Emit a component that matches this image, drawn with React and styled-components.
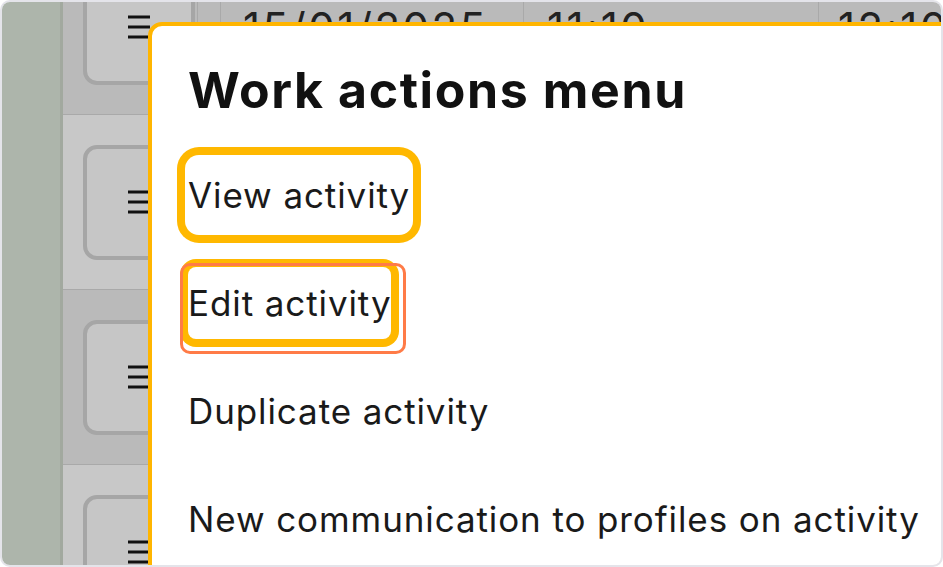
import React from 'react';
import styled, { createGlobalStyle } from 'styled-components';

const GlobalStyle = createGlobalStyle`
    body {
        margin: 0;
        background: #fff;
        font-family: Inter, "Noto Sans", sans-serif;
        color: #111;
    }
`;

const Frame = styled.div`
    position: relative;
    width: 943px;
    height: 567px;
    box-sizing: border-box;
    border: 2px solid #e4e4ea;
    border-radius: 10px;
    overflow: hidden;
    display: flex;
    background: #fff;
`;

const Sidebar = styled.div`
    width: 58px;
    flex-shrink: 0;
    background: #adb5ab;
    border-right: 3px solid #a2a99f;
`;

const Table = styled.div`
    flex: 1;
    display: flex;
    flex-direction: column;
    margin-top: -62px;
`;

const Row = styled.div`
    display: grid;
    grid-template-columns: 135px 23px 303px 295px 1fr;
    height: 175px;
    flex-shrink: 0;
    box-sizing: border-box;
    border-bottom: 1px solid #a9a9a9;
    background: ${props => (props.dark ? '#bababa' : '#c8c8c8')};
`;

const Cell = styled.div`
    display: flex;
    align-items: center;
    box-sizing: border-box;
    border-right: 1px solid #a9a9a9;
    padding-left: ${props => props.pad || 0}px;
    font-size: 42px;
    letter-spacing: 2.5px;
    color: #222;
`;

const ActionButton = styled.div`
    width: 112px;
    height: 115px;
    margin-left: 20px;
    box-sizing: border-box;
    border: 4px solid #a6a6a6;
    border-radius: 14px;
    background: #c6c6c6;
    display: flex;
    align-items: center;
    justify-content: center;
`;

const Popup = styled.div`
    position: absolute;
    left: 146px;
    top: 20px;
    width: 820px;
    height: 620px;
    box-sizing: border-box;
    background: #fff;
    border: 4px solid #ffb500;
    border-radius: 14px;
    padding: 34px 0 0 36px;
`;

const Title = styled.h2`
    margin: 0 0 21px;
    font-size: 50px;
    line-height: 60px;
    font-weight: 700;
    color: #111;
    letter-spacing: 1.6px;
`;

const MenuList = styled.div`
    display: flex;
    flex-direction: column;
`;

const MenuItem = styled.div`
    height: 108px;
    display: flex;
    align-items: center;
    font-size: 35px;
    letter-spacing: 0.9px;
    color: #1a1a1a;
    white-space: nowrap;
`;

const Label = styled.span`
    position: relative;
    display: inline-block;
    line-height: 40px;
    padding: ${props => (props.tight ? '16px 0' : '20px 3px')};
    margin-left: ${props => (props.tight ? 0 : -3)}px;
    border-radius: ${props => (props.tight ? 8 : 14)}px;
    box-shadow: ${props => (props.ring ? '0 0 0 8px #ffb800' : 'none')};

    &::after {
        content: '';
        display: ${props => (props.marked ? 'block' : 'none')};
        position: absolute;
        left: -8px;
        top: -4px;
        right: -15px;
        bottom: -15px;
        border: 3px solid #ff7b47;
        border-radius: 10px;
    }
`;

const HandleIcon = () => (
    <svg width="22" height="24" viewBox="0 0 22 24">
        <g stroke="#111" strokeWidth="3">
            <line x1="0" y1="2" x2="22" y2="2" />
            <line x1="0" y1="12" x2="22" y2="12" />
            <line x1="0" y1="22" x2="22" y2="22" />
        </g>
    </svg>
);

const rows = [
    { dark: true, date: '15/01/2025', from: '11:10', to: '12:10' },
    { dark: false },
    { dark: true },
    { dark: false },
];

const actions = [
    { text: 'View activity', ring: true },
    { text: 'Edit activity', ring: true, tight: true, marked: true },
    { text: 'Duplicate activity' },
    { text: 'New communication to profiles on activity' },
];

const App = () => (
    <>
        <GlobalStyle />
        <Frame>
            <Sidebar />
            <Table>
                {rows.map((row, i) => (
                    <Row key={i} dark={row.dark}>
                        <Cell>
                            <ActionButton>
                                <HandleIcon />
                            </ActionButton>
                        </Cell>
                        <Cell />
                        <Cell pad={22}>{row.date}</Cell>
                        <Cell pad={23}>{row.from}</Cell>
                        <Cell pad={19}>{row.to}</Cell>
                    </Row>
                ))}
            </Table>
            <Popup>
                <Title>Work actions menu</Title>
                <MenuList>
                    {actions.map(a => (
                        <MenuItem key={a.text}>
                            <Label ring={a.ring} tight={a.tight} marked={a.marked}>
                                {a.text}
                            </Label>
                        </MenuItem>
                    ))}
                </MenuList>
            </Popup>
        </Frame>
    </>
);

export default App;
